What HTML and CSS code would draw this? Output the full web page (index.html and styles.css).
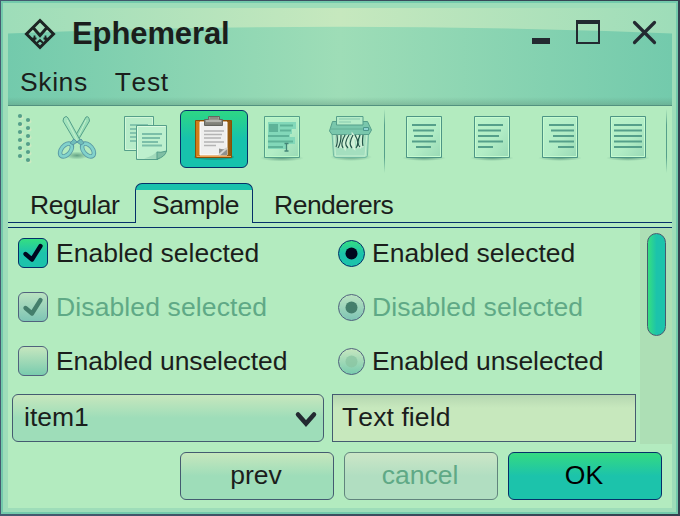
FILE: index.html
```html
<!DOCTYPE html>
<html lang="en">
<head>
<meta charset="utf-8">
<title>Ephemeral</title>
<link rel="stylesheet" href="styles.css">
</head>
<body>
<div class="window"><div class="rim"><div class="content">
  <header class="header">
    <svg class="sheen" viewBox="0 0 664 26" preserveAspectRatio="none">
      <defs><linearGradient id="sheen"><stop offset="0" stop-color="#9eddb9"/><stop offset=".5" stop-color="#c6e8be"/><stop offset="1" stop-color="#9eddb9"/></linearGradient></defs>
      <path d="M0 0H664V25.5Q332 12 0 25.5Z" fill="url(#sheen)"/>
    </svg>
    <div class="titlebar">
      <svg class="logo" width="32" height="32" viewBox="0 0 32 32" fill="none" stroke="#1d2423" stroke-width="3">
        <path d="M16 2.500L29.500 16L16 29.500L2.500 16ZM9 9.500L16 17.500L23 9.500"/>
        <path d="M10.500 17.500v4H7M12.500 20.500h-4M21.500 17.500v4H25M19.500 20.500h4M13 25l3-3 3 3" stroke-width="1.800"/>
      </svg>
      <h1>Ephemeral</h1>
      <div class="controls">
        <svg width="126" height="28" viewBox="0 0 126 28">
          <path d="M0 20h18v6H0zM44 2h24v24H44zM46 6v18h20V6z" fill="#232a31" fill-rule="evenodd"/>
          <path d="M102.500 4.500L122.500 24.500M122.500 4.500L102.500 24.500" stroke="#232a31" stroke-width="3.200" stroke-linecap="round"/>
        </svg>
      </div>
    </div>
    <nav class="menu"><span>Skins</span><span>Test</span></nav>
  </header>

  <div class="toolbar">
    <svg class="grip" width="24" height="78" viewBox="0 0 24 78">
      <g fill="#ccebc2"><circle cx="13.500" cy="11.500" r="2"/><circle cx="13.500" cy="19.500" r="2"/><circle cx="13.500" cy="27.500" r="2"/><circle cx="13.500" cy="35.500" r="2"/><circle cx="13.500" cy="43.500" r="2"/><circle cx="13.500" cy="51.500" r="2"/><circle cx="21.500" cy="15.500" r="2"/><circle cx="21.500" cy="23.500" r="2"/><circle cx="21.500" cy="31.500" r="2"/><circle cx="21.500" cy="39.500" r="2"/><circle cx="21.500" cy="47.500" r="2"/><circle cx="21.500" cy="55.500" r="2"/></g>
      <g fill="#559f8a"><circle cx="12" cy="10" r="2.100"/><circle cx="12" cy="18" r="2.100"/><circle cx="12" cy="26" r="2.100"/><circle cx="12" cy="34" r="2.100"/><circle cx="12" cy="42" r="2.100"/><circle cx="12" cy="50" r="2.100"/><circle cx="20" cy="14" r="2.100"/><circle cx="20" cy="22" r="2.100"/><circle cx="20" cy="30" r="2.100"/><circle cx="20" cy="38" r="2.100"/><circle cx="20" cy="46" r="2.100"/><circle cx="20" cy="54" r="2.100"/></g>
    </svg>
    <div class="tool">
      <svg width="48" height="48" viewBox="2 0 48 48">
        <defs>
          <radialGradient id="shade"><stop offset="0" stop-color="#42836d" stop-opacity=".7"/><stop offset="1" stop-color="#42836d" stop-opacity="0"/></radialGradient>
          <linearGradient id="paper" x2="1" y2="1"><stop offset="0" stop-color="#b9f3c9"/><stop offset=".55" stop-color="#b2edc6"/><stop offset="1" stop-color="#98d9b5"/></linearGradient>
        </defs>
        <ellipse cx="25" cy="41.500" rx="12" ry="4" fill="url(#shade)"/>
        <path d="M34 3Q37 1.500 37.500 7L25 28L21 26Z" fill="#98deb5" stroke="#559f8a"/>
        <path d="M14 2.500Q11 3 11 7L24 29L28 26L16 4Q15 2.500 14 2.500Z" fill="#a3e4bd" stroke="#559f8a"/>
        <path d="M15 6L25 26M34 6L27 21" stroke="#c7f0ce"/>
        <g fill="none"><ellipse cx="14" cy="36" rx="4.500" ry="7.500" transform="rotate(40 14 36)" stroke="#5999a4" stroke-width="4.500"/><ellipse cx="14" cy="36" rx="4.500" ry="7.500" transform="rotate(40 14 36)" stroke="#82d2cb" stroke-width="2.800"/>
        <ellipse cx="36" cy="36" rx="4.500" ry="7.500" transform="rotate(-40 36 36)" stroke="#5999a4" stroke-width="4.500"/><ellipse cx="36" cy="36" rx="4.500" ry="7.500" transform="rotate(-40 36 36)" stroke="#82d2cb" stroke-width="2.800"/></g>
        <path d="M18 29L22 25L25 28L29 25L32 29L29 31L25 28L21 31Z" fill="#70bdba" stroke="#5999a4"/>
      </svg>
    </div>
    <div class="tool">
      <svg width="48" height="48" viewBox="2 0 48 48">
        <path d="M4.500 2.500H33.500V36.500H4.500Z" fill="#b7ecc9" stroke="#559f8a"/>
        <path d="M5.500 3.500H32.500V35.500H5.500Z" fill="none" stroke="#d1f7d7"/>
        <path d="M10 11H28M10 15H18M10 19H18M10 23H18M10 27H18" stroke="#83c4ad" stroke-width="2"/>
        <path d="M16.500 11.500H46.500V37L38 45.500H16.500Z" fill="#bdf0ce" stroke="#559f8a"/>
        <path d="M17.500 44V12.500H45.500" fill="none" stroke="#dcfbe0"/>
        <path d="M22 20H42M22 24H40M22 28H38M22 31.500H42" stroke="#7bbea8" stroke-width="2"/>
        <path d="M24 44.500Q34 42 37 37v8z" fill="#a2dabb"/><path d="M37 45V38Q40 39 46.500 37Q45 43 37 45Z" fill="#7fbea4" stroke="#559f8a"/>
      </svg>
    </div>
    <div class="tool active">
      <svg width="48" height="48" viewBox="0 0 48 48">
        <defs><linearGradient id="wood"><stop stop-color="#d27d1b"/><stop offset=".5" stop-color="#ce7716"/><stop offset="1" stop-color="#8b5811"/></linearGradient><linearGradient id="clip" x2="0" y2="1"><stop stop-color="#aaa9a1"/><stop offset="1" stop-color="#77776f"/></linearGradient></defs>
        <ellipse cx="24" cy="43" rx="20" ry="3" fill="#165950" opacity=".35"/>
        <path d="M5.500 6.500H41.500V43.500H5.500Z" fill="url(#wood)" stroke="#895006"/>
        <path d="M7 42.500H41" stroke="#efa453"/>
        <path d="M10 8H37V41H10Z" fill="#efefee" stroke="#fff"/>
        <path d="M14 17H34M14 20.500H32M14 24H31M14 28H34M14 31.500H26" stroke="#b4b4b4" stroke-width="1.500"/>
        <path d="M29 41V34.500Q34 36 37 34V41Z" fill="#90908c"/><path d="M29 41L37 34" stroke="#d5d5d2" stroke-width="2"/>
        <path d="M18.500 5.500V2.500H29.500V5.500H32.500V11.500H14.500V5.500Z" fill="url(#clip)" stroke="#65655f"/>
        <path d="M16 7H31" stroke="#c8c7c1" stroke-width="1.300"/><path d="M20 4H28" stroke="#8c8c84" stroke-width="2"/>
      </svg>
    </div>
    <div class="tool">
      <svg width="48" height="48" viewBox="0 0 48 48">
        <ellipse cx="24" cy="44" rx="22" ry="3.500" fill="url(#shade)"/>
        <path d="M6.500 2.500H41.500V43.500H6.500Z" fill="url(#paper)" stroke="#559f8a"/>
        <path d="M7.500 3.500H40.500V42.500H7.500Z" fill="none" stroke="#bbf8c8"/>
        <path d="M10 8H38V15H34V20H32V23H37V30H29V35H10Z" fill="#82d8b9"/>
        <path d="M11 10H20V18H11ZM22 10.500H35v2H22zM22 15.500H33v2H22zM10 21H31v2H10zM10 26.500H35v2H10zM10 32H25v2H10z" fill="#5eb398"/>
        <path d="M26.500 29.500H28.500V37H26.500M30.500 29.500H28.500V37H30.500" fill="none" stroke="#438577" stroke-width="1.300"/>
      </svg>
    </div>
    <div class="tool">
      <svg width="48" height="48" viewBox="0 0 48 48">
        <ellipse cx="25" cy="43" rx="21" ry="4" fill="url(#shade)"/>
        <path d="M6 19H42.500L41.500 41.500Q41 43.500 39 43.500H10Q8 43.500 7.500 41.500Z" fill="#a4dfbf" stroke="#70b8a0"/>
        <path d="M8 20L9.500 42H39L41 20" fill="none" stroke="#c5efd0"/>
        <path d="M6.500 7.500H41.500L45.500 16L43 20.500H6L3.500 17Z" fill="#79c7ac" stroke="#559f8a" stroke-linejoin="round"/>
        <path d="M10.500 2.500H37V11H10.500Z" fill="#b5ecc8" stroke="#559f8a"/>
        <path d="M13 5H34M13 8H25" stroke="#86c9ae"/>
        <path d="M4 15H45" stroke="#65b097"/><path d="M37.500 13.500h5v3h-5z" fill="#8dd3d0" stroke="#4a968a"/>
        <path d="M11 21Q12 29 10 33M14 21Q15 29 12 34M18 21Q17 28 15 34M22 21Q16 28 19 34L23 21Q20 30 24 34M26 21Q23 30 28 34L27 21Q35 30 31 34M32 21Q29 30 35 34M36 21Q34 30 37 33" fill="none" stroke="#d1f1d8" stroke-width="2.400"/>
        <path d="M11 21Q12 29 10 33M15 21Q15 29 12 34M19 21Q14 30 17 34M23 21Q17 30 22 34M27 21Q22 30 26 34M29 21Q34 29 30 34M34 21Q30 30 34 33M37 21Q36 29 37 32" fill="none" stroke="#245549" stroke-width="1.200"/>
      </svg>
    </div>
    <i class="separator"></i>
    <div class="tool"><svg width="48" height="48" viewBox="0 0 48 48"><ellipse cx="24" cy="44" rx="22" ry="3" fill="url(#shade)"/><path d="M6.500 2.500H41.500V43.500H6.500Z" fill="url(#paper)" stroke="#4d9585"/><path d="M7.500 3.500H40.500V42.500H7.500Z" fill="none" stroke="#c5fbd0"/><path d="M12 11H36M13 16.500H34M14 22H33M12 27.500H36M16 33H31" stroke="#559f8a" stroke-width="2"/></svg></div>
    <div class="tool"><svg width="48" height="48" viewBox="0 0 48 48"><ellipse cx="24" cy="44" rx="22" ry="3" fill="url(#shade)"/><path d="M6.500 2.500H41.500V43.500H6.500Z" fill="url(#paper)" stroke="#4d9585"/><path d="M7.500 3.500H40.500V42.500H7.500Z" fill="none" stroke="#c5fbd0"/><path d="M10 11H35M10 16.500H33M10 22H31M10 27.500H35M10 33H25" stroke="#559f8a" stroke-width="2"/></svg></div>
    <div class="tool"><svg width="48" height="48" viewBox="0 0 48 48"><ellipse cx="24" cy="44" rx="22" ry="3" fill="url(#shade)"/><path d="M6.500 2.500H41.500V43.500H6.500Z" fill="url(#paper)" stroke="#4d9585"/><path d="M7.500 3.500H40.500V42.500H7.500Z" fill="none" stroke="#c5fbd0"/><path d="M13 11H38M15 16.500H38M17 22H38M13 27.500H38M22 33H38" stroke="#559f8a" stroke-width="2"/></svg></div>
    <div class="tool"><svg width="48" height="48" viewBox="0 0 48 48"><ellipse cx="24" cy="44" rx="22" ry="3" fill="url(#shade)"/><path d="M6.500 2.500H41.500V43.500H6.500Z" fill="url(#paper)" stroke="#4d9585"/><path d="M7.500 3.500H40.500V42.500H7.500Z" fill="none" stroke="#c5fbd0"/><path d="M10 11H38M10 16.500H38M10 22H38M10 27.500H38M10 33H38" stroke="#559f8a" stroke-width="2"/></svg></div>
    <i class="separator last"></i>
  </div>

  <div class="tabs"><div class="tab regular">Regular</div><div class="tab selected">Sample</div><div class="tab renderers">Renderers</div></div>

  <main class="pane">
    <div class="form">
      <div class="row">
        <label class="option"><svg width="30" height="30" viewBox="0 0 30 30"><defs><linearGradient id="on" x2="0" y2="1"><stop stop-color="#36df80"/><stop offset=".5" stop-color="#1cc3ab"/><stop offset="1" stop-color="#1cc3ab"/></linearGradient></defs><rect x=".5" y=".5" width="29" height="29" rx="5.500" fill="url(#on)" stroke="#053069"/><path d="M7.500 16L14 21.500L22.500 8" fill="none" stroke="#00071f" stroke-width="4.300" stroke-linecap="round" stroke-linejoin="round"/></svg>Enabled selected</label>
        <label class="option radio"><svg width="28" height="28" viewBox="0 0 28 28"><circle cx="13.500" cy="13.500" r="13" fill="url(#on)" stroke="#053069"/><circle cx="13.500" cy="13.500" r="6" fill="#00071f"/></svg>Enabled selected</label>
      </div>
      <div class="row disabled">
        <label class="option"><svg width="30" height="30" viewBox="0 0 30 30"><defs><linearGradient id="off" x2="0" y2="1"><stop stop-color="#bbe3c1"/><stop offset="1" stop-color="#7dc4b4"/></linearGradient></defs><rect x=".5" y=".5" width="29" height="29" rx="5.500" fill="url(#off)" stroke="#50627d"/><path d="M7.500 16L14 21.500L22.500 8" fill="none" stroke="#447e6c" stroke-width="4.300" stroke-linecap="round" stroke-linejoin="round"/></svg>Disabled selected</label>
        <label class="option radio"><svg width="28" height="28" viewBox="0 0 28 28"><circle cx="13.500" cy="13.500" r="13" fill="url(#off)" stroke="#50627d"/><circle cx="13.500" cy="13.500" r="6" fill="#447e6c"/></svg>Disabled selected</label>
      </div>
      <div class="row unselected">
        <label class="option"><svg width="30" height="30" viewBox="0 0 30 30"><defs><linearGradient id="blank" x2="0" y2="1"><stop stop-color="#c7e7bf"/><stop offset="1" stop-color="#78cbae"/></linearGradient></defs><rect x=".5" y=".5" width="29" height="29" rx="5.500" fill="url(#blank)" stroke="#50627d"/></svg>Enabled unselected</label>
        <label class="option radio"><svg width="28" height="28" viewBox="0 0 28 28"><circle cx="13.500" cy="13.500" r="13" fill="url(#blank)" stroke="#50627d"/><circle cx="13.500" cy="13.500" r="6" fill="#8bc5a3" opacity=".8"/></svg>Enabled unselected</label>
      </div>
      <div class="fields">
        <div class="combo">item1<svg width="24" height="20" viewBox="0 0 24 20"><path d="M4 5.500L12 14.500L20 5.500" fill="none" stroke="#232a31" stroke-width="4.500" stroke-linecap="round"/></svg></div>
        <div class="textfield">Text field</div>
      </div>
    </div>
    <div class="scrollbar"><div class="thumb"></div></div>
  </main>
  <footer class="actions"><div class="button">prev</div><div class="button unavailable">cancel</div><div class="button primary">OK</div></footer>
</div></div></div>
</body>
</html>
```
FILE: styles.css
```css
* { box-sizing: border-box; }
body { margin: 0; font: 26.5px "Liberation Sans", Arial, sans-serif; color: #1b1e1c; }
.window { width: 680px; height: 516px; padding: 1px 2px 2px 1px; background: linear-gradient(90deg, #445b70, #34414f); }
.rim { height: 513px; border: 2px solid #73caac; background: #9eddb9; padding: 5px 4px 4px 5px; }
.content { height: 500px; background: #b3ebbf; display: flex; flex-direction: column; white-space: nowrap; }

.header { position: relative; height: 98px; flex: none; border-bottom: 1px solid #52917f; background: linear-gradient(transparent 89px, #5e917866), linear-gradient(90deg, #73caac, #9eddb7 50%, #73caac); }
.sheen { position: absolute; left: 0; top: 0; width: 100%; height: 26px; }
.titlebar { position: relative; display: flex; height: 52px; padding-left: 16px; align-items: center; }
.logo { margin-bottom: 1px; }
h1 { margin: 0 0 0 16px; font-size: 31px; line-height: 36px; letter-spacing: -0.1px; }
.controls { display: flex; margin: 0 14px 4px auto; }
.menu { position: relative; display: flex; gap: 27px; margin-left: 12px; line-height: 45px; letter-spacing: 0.6px; font-kerning: none; }

.toolbar { display: flex; height: 77px; flex: none; }
.grip { margin-right: 12px; }
.tool { display: flex; width: 68px; height: 58px; margin-top: 4px; border-radius: 6px; justify-content: center; padding-top: 4px; }
.tool.active { border: 1px solid #053069; background: linear-gradient(#2ed784, #17c2ac 50%, #17c2ac); padding-top: 3px; }
.separator { width: 1px; height: 64px; margin: 3px 5px 0 0; background: linear-gradient(transparent, #559f8a 25%, #559f8a 75%, transparent); }
.separator.last { margin: 3px 0 0 4px; }

.tabs { display: flex; height: 40px; flex: none; line-height: 45px; letter-spacing: -0.5px; }
.tab { border-bottom: 1px solid #053069; }
.regular { width: 127px; padding-left: 22px; }
.selected { width: 118px; padding-left: 3px; border: 1px solid #053069; border-bottom: 0; border-radius: 7px 7px 0 0; text-align: center; line-height: 43px; background: linear-gradient(#19c2ac 6px, transparent 6px); }
.renderers { flex: 1; padding-left: 21px; }

.pane { display: flex; height: 217px; flex: none; margin-top: 4px; border-top: 1px solid #053069; }
.form { width: 632px; }
.row { display: flex; height: 54px; padding: 0 0 4px 10px; }
.option { display: flex; align-items: center; width: 320px; gap: 8px; }
.radio { gap: 6px; width: 290px; }
.radio svg { margin-top: 2px; }
.disabled { color: #5fa986; letter-spacing: 0.12px; }
.unselected { letter-spacing: -0.08px; }
.fields { display: flex; gap: 8px; padding: 4px; }
.combo { display: flex; width: 312px; height: 48px; border: 1px solid #445b70; border-radius: 6px; padding: 0 5px 2px 11px; justify-content: space-between; align-items: center; background: linear-gradient(#c7e7bd, #9eddb9 50%); }
.combo svg { margin-top: 4px; }
.textfield { width: 304px; height: 48px; border: 1px solid #445b70; padding-left: 9px; line-height: 44px; letter-spacing: 0.1px; font-kerning: none; background: linear-gradient(#b5d7b1, #c7e8bd 13px); }
.scrollbar { width: 32px; background: #addfb5; padding: 5px 0 0 7px; }
.thumb { width: 19px; height: 103px; border: 1px solid #445b70; border-radius: 10px; background: linear-gradient(90deg, #36df80, #1cc3ab 50%); }

.actions { display: flex; gap: 10px; justify-content: flex-end; padding: 8px 10px 0 0; }
.button { width: 154px; height: 48px; border: 1px solid #445b70; border-radius: 6px; padding-right: 2px; text-align: center; line-height: 45px; background: linear-gradient(#c7e7bd, #9eddb9 50%); }
.unavailable { color: #5fa986; border-color: #61847d; background: linear-gradient(#cce6c7, #b1dec1 50%); }
.primary { color: #000; border-color: #053069; background: linear-gradient(#35da81, #1cc3ab 50%); }
```
